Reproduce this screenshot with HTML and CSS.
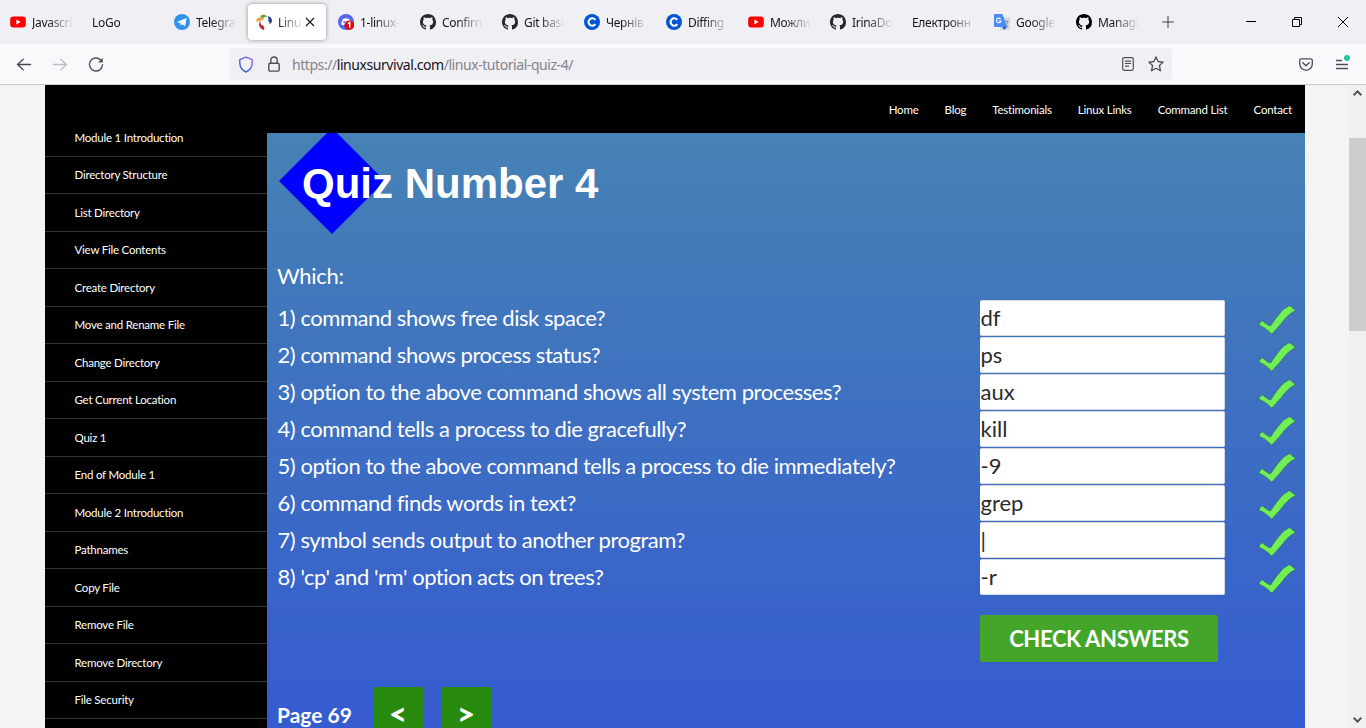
FILE: index.html
```
<!DOCTYPE html>
<html lang="en">
<head>
<meta charset="utf-8">
<title>Linux Survival</title>
<link rel="stylesheet" href="styles.css">
</head>
<body>
<svg class="defs" width="0" height="0">
  <symbol id="youtube" viewBox="0 0 16 16"><rect x="0.2" y="2.4" width="15.6" height="11.2" rx="3" fill="#f00"/><path d="M6.4 5.6v4.8l4.2-2.4z" fill="#fff"/></symbol>
  <symbol id="telegram" viewBox="0 0 16 16"><circle cx="8" cy="8" r="8" fill="#2f93ee"/><path d="M3 8 12.6 4.1 11 12.3 8.2 10.3 6.8 11.6 6.4 9.2z" fill="#fff"/><path d="M6.5 9.3 10.4 6.2 7.4 9.7 6.8 11.4z" fill="#a9d3f8"/></symbol>
  <symbol id="github" viewBox="0 0 16 16"><path d="M8 0C3.58 0 0 3.58 0 8c0 3.54 2.29 6.53 5.47 7.59.4.07.55-.17.55-.38 0-.19-.01-.82-.01-1.49-2.01.37-2.53-.49-2.69-.94-.09-.23-.48-.94-.82-1.13-.28-.15-.68-.52-.01-.53.63-.01 1.08.58 1.23.82.72 1.21 1.87.87 2.33.66.07-.52.28-.87.51-1.07-1.78-.2-3.64-.89-3.64-3.95 0-.87.31-1.59.82-2.15-.08-.2-.36-1.02.08-2.12 0 0 .67-.21 2.2.82.64-.18 1.32-.27 2-.27s1.36.09 2 .27c1.53-1.04 2.2-.82 2.2-.82.44 1.1.16 1.92.08 2.12.51.56.82 1.27.82 2.15 0 3.07-1.87 3.75-3.65 3.95.29.25.54.73.54 1.48 0 1.07-.01 1.93-.01 2.2 0 .21.15.46.55.38A8.01 8.01 0 0 0 16 8c0-4.42-3.58-8-8-8z" fill="currentColor"/></symbol>
  <symbol id="coursera" viewBox="0 0 16 16"><circle cx="8" cy="8" r="8" fill="#0056d2"/><path d="M11.3 10.1A3.7 3.7 0 1 1 11.3 5.9" fill="none" stroke="#fff" stroke-width="2.1"/></symbol>
  <symbol id="joomla" viewBox="0 0 16 16"><path d="M4 2.3Q7.8-1.6 11.5 2.7Q8.4 2.6 7 4.6Q5.5 4.5 4 2.3z" fill="#6ba644"/><path d="M0 7.8Q.6 3.2 4.4 3.5Q7.3 4 8.2 6.2Q4.6 5.6 3.6 7.4Q1.8 6.6 0 7.8z" fill="#f39c34"/><path d="M11.6 2.2Q16.2 2.4 16 7.4Q15.4 9.6 13.4 10.2Q13.8 7.6 12 6.4Q13 4.4 11.6 2.2z" fill="#2c4b95"/><path d="M4.4 6.8Q3.9 9.4 5.4 11Q7.2 11 8.2 13V16Q3.7 15.2 3 10.7Q2.9 8.4 4.4 6.8z" fill="#b7332e"/></symbol>
  <symbol id="discord" viewBox="0 0 16 16"><circle cx="8" cy="8" r="8" fill="#5865f2"/><path d="M4.9 5Q8 3.7 11.1 5Q13 8 12.6 10.6L10.8 11.6 10 10.4H6L5.2 11.6 3.4 10.6Q3 8 4.9 5z" fill="#fff"/><ellipse cx="6.3" cy="8.1" rx="1" ry="1.1" fill="#5865f2"/><circle cx="11.4" cy="11.2" r="4.8" fill="#e00808"/><path d="M10 9.7 11.7 8.5V13.8" fill="none" stroke="#fff" stroke-width="1.5"/></symbol>
  <symbol id="translate" viewBox="0 0 16 16"><rect x="6" y="3" width="10" height="13" rx=".7" fill="#d9dcde"/><path d="M9 7.4h5.7M12 5.8v1.6M10 8.2q1.2 3 4 4.6M13.7 8q-1 3.4-3.4 4.7" fill="none" stroke="#7096a0" stroke-width="1"/><path d="M.7 0h7.8L13 13H.7Q0 13 0 12.3V.7Q0 0 .7 0z" fill="#4b8bf5"/><path d="M8.2 13H13l-3 3z" fill="#3058c4"/><path d="M6.6 5A2.3 2.3 0 1 0 7 7H4.8" fill="none" stroke="#fff" stroke-width="1.1"/></symbol>
  <symbol id="check" viewBox="0 0 36 30" preserveAspectRatio="none"><path d="M.5 20.2 3.5 15.6 9.3 20 11.9 21Q18 11 24.2 4.2L30 .5 35.5 5.6Q28.5 9 21.5 19.2L13 29.2 10.5 26.4Q5 21.4.5 20.2z" fill="#72ef55" stroke="#285f45" stroke-width=".8" stroke-dasharray="1.2 .8"/></symbol>
</svg>
<div class="browser">
  <div class="tabbar">
    <div class="tab"><svg class="ico"><use href="#youtube"/></svg><span class="label">Javascri</span></div>
    <div class="tab"><span class="label">LoGo</span></div>
    <div class="tab"><svg class="ico"><use href="#telegram"/></svg><span class="label">Telegra</span></div>
    <div class="tab active"><svg class="ico"><use href="#joomla"/></svg><span class="label">Linu</span><svg class="close" viewBox="0 0 10 10"><path d="M1 1l8 8M9 1l-8 8" stroke="#15141a" stroke-width="1.1"/></svg></div>
    <div class="tab"><svg class="ico"><use href="#discord"/></svg><span class="label">1-linux-</span></div>
    <div class="tab"><svg class="ico gh"><use href="#github"/></svg><span class="label">Confirn</span></div>
    <div class="tab"><svg class="ico gh"><use href="#github"/></svg><span class="label">Git basi</span></div>
    <div class="tab"><svg class="ico"><use href="#coursera"/></svg><span class="label">Чернів</span></div>
    <div class="tab"><svg class="ico"><use href="#coursera"/></svg><span class="label">Diffing</span></div>
    <div class="tab"><svg class="ico"><use href="#youtube"/></svg><span class="label">Можли</span></div>
    <div class="tab"><svg class="ico gh"><use href="#github"/></svg><span class="label">IrinaDo</span></div>
    <div class="tab"><span class="label">Електронн</span></div>
    <div class="tab"><svg class="ico"><use href="#translate"/></svg><span class="label">Google</span></div>
    <div class="tab"><svg class="ico"><use href="#github"/></svg><span class="label">Managi</span></div>
    <svg class="plus" viewBox="0 0 12 12"><path d="M6 0v12M0 6h12" stroke="#4a4953" stroke-width="1.1"/></svg>
    <div class="window-buttons">
      <svg width="10" height="10"><path d="M0 4.5h10" stroke="#000"/></svg>
      <svg width="10" height="10" fill="none" stroke="#000"><path d="M.5 2.5h7v7h-7zM2.5 2.5v-2h7v7h-2"/></svg>
      <svg width="10" height="10"><path d="M0 0l10 10M10 0L0 10" stroke="#000"/></svg>
    </div>
  </div>
  <div class="toolbar">
    <div class="history">
      <svg width="16" height="16" fill="none" stroke="#4a4953" stroke-width="1.3" stroke-linecap="round" stroke-linejoin="round"><path d="M14.5 8.5H1.5M7.2 3.2 1.5 8.5l5.7 5.3"/></svg>
      <svg width="16" height="16" fill="none" stroke="#bcbbc1" stroke-width="1.3" stroke-linecap="round" stroke-linejoin="round"><path d="M1.5 8.5h13M8.8 3.2 14.5 8.5l-5.7 5.3"/></svg>
      <svg width="16" height="16" fill="none" stroke="#55545e" stroke-width="1.4" stroke-linecap="round"><path d="M14.5 8.8A6.5 6.5 0 1 1 12.6 3.9L14 5.2"/><path d="M14.7 1.7v4.7H10z" fill="#55545e" stroke="none"/></svg>
    </div>
    <div class="urlbar">
      <svg width="16" height="17" viewBox="0 0 16 17" fill="none"><defs><linearGradient id="sg" x1="0" y1="1" x2="1" y2="0"><stop offset="0" stop-color="#2860ce"/><stop offset="1" stop-color="#9060f5"/></linearGradient></defs><path d="M8 1.2 14.2 3.6V7Q14.2 13 8 16 1.8 13 1.8 7V3.6z" stroke="url(#sg)" stroke-width="1.4" stroke-linejoin="round"/></svg>
      <svg class="lock" width="12" height="16" fill="none" stroke="#4f4e57" stroke-width="1.4"><rect x=".8" y="7.2" width="10.4" height="7.9" rx="1.3"/><path d="M2.8 7V4.2a3.2 3.2 0 0 1 6.4 0V7"/></svg>
      <span class="url">https://<b>linuxsurvival.com</b>/linux-tutorial-quiz-4/</span>
      <svg width="12" height="14" fill="none" stroke="#4f4e57" stroke-width="1.2"><rect x=".7" y=".7" width="10.6" height="12.6" rx="1.5"/><path d="M3 4.2h6M3 6.5h6M3 9.2h4"/></svg>
      <svg class="star" width="16" height="16" fill="none" stroke="#4f4e57" stroke-width="1.3" stroke-linejoin="round"><path d="M8 .9 10.1 5.5 15.2 6.1 11.4 9.5 12.5 14.8 8 12.3 3.5 14.8 4.6 9.5.8 6.1 5.9 5.5z"/></svg>
    </div>
    <svg class="pocket" width="14" height="13" fill="none" stroke="#4f4e57" stroke-width="1.3"><path d="M2 .9h10q1.3 0 1.3 1.3V6Q13 11.4 7 12.3 1 11.4.7 6V2.2Q.7.9 2 .9z"/><path d="M3.8 4.8 7 7.8l3.2-3" stroke-width="1.4" stroke-linecap="round"/></svg>
    <svg class="menu" width="16" height="16"><path d="M1 5.5h6M1 9.5h12M1 13.5h12" stroke="#4f4e57" stroke-width="1.3"/><circle cx="12" cy="3" r="3" fill="#2ac3a2"/></svg>
  </div>
</div>
<div class="viewport">
  <div class="site">
    <nav class="topnav"><a>Home</a><a>Blog</a><a>Testimonials</a><a>Linux Links</a><a>Command List</a><a>Contact</a></nav>
    <div class="columns">
      <ul class="sidebar">
        <li>Module 1 Introduction</li><li>Directory Structure</li><li>List Directory</li><li>View File Contents</li><li>Create Directory</li><li>Move and Rename File</li><li>Change Directory</li><li>Get Current Location</li><li>Quiz 1</li><li>End of Module 1</li><li>Module 2 Introduction</li><li>Pathnames</li><li>Copy File</li><li>Remove File</li><li>Remove Directory</li><li>File Security</li><li></li>
      </ul>
      <main class="quiz">
        <header class="hero"><svg class="diamond" width="106" height="101"><path d="M53-5 106 48 53 101 0 48z" fill="#00f"/></svg><h1>Quiz Number 4</h1></header>
        <p class="intro">Which:</p>
        <div class="rows">
          <div class="row"><span>1) command shows free disk space?</span><div class="field">df</div><svg class="tick"><use href="#check"/></svg></div>
          <div class="row"><span>2) command shows process status?</span><div class="field">ps</div><svg class="tick"><use href="#check"/></svg></div>
          <div class="row"><span>3) option to the above command shows all system processes?</span><div class="field">aux</div><svg class="tick"><use href="#check"/></svg></div>
          <div class="row"><span>4) command tells a process to die gracefully?</span><div class="field">kill</div><svg class="tick"><use href="#check"/></svg></div>
          <div class="row"><span>5) option to the above command tells a process to die immediately?</span><div class="field">-9</div><svg class="tick"><use href="#check"/></svg></div>
          <div class="row"><span>6) command finds words in text?</span><div class="field">grep</div><svg class="tick"><use href="#check"/></svg></div>
          <div class="row"><span>7) symbol sends output to another program?</span><div class="field">|</div><svg class="tick"><use href="#check"/></svg></div>
          <div class="row"><span>8) 'cp' and 'rm' option acts on trees?</span><div class="field">-r</div><svg class="tick"><use href="#check"/></svg></div>
        </div>
        <div class="check-button">CHECK ANSWERS</div>
        <div class="pager"><b>Page 69</b><span class="pg">&lt;</span><span class="pg">&gt;</span></div>
      </main>
    </div>
  </div>
  <div class="scrollbar">
    <svg width="9" height="6"><path d="M.7 5.2 4.5 1.4 8.3 5.2" fill="none" stroke="#505050" stroke-width="2"/></svg>
    <div class="thumb"></div>
    <svg width="9" height="6"><path d="M.7.8 4.5 4.6 8.3.8" fill="none" stroke="#505050" stroke-width="2"/></svg>
  </div>
</div>
</body>
</html>
```
FILE: styles.css
```
* { box-sizing: border-box; }
body { margin: 0; width: 1366px; height: 728px; overflow: hidden; display: flex; flex-direction: column; background: #f4f4f4; font-family: Lato, sans-serif; }
.defs { position: absolute; }
svg { flex: none; display: block; }

.browser { height: 85px; flex: none; background: #f9f9fb; border-bottom: 1px solid #ccccce; font-family: "Noto Sans", sans-serif; }
.tabbar { height: 44px; background: #f0eff4; display: flex; align-items: center; gap: 4px; padding-left: 2px; }
.tab { width: 78px; height: 36px; flex: none; display: flex; align-items: center; gap: 6px; padding: 0 7px 0 8px; font-size: 12px; letter-spacing: -.3px; color: #15141a; border-radius: 4px; }
.tab.active { background: #fff; box-shadow: 0 0 4px rgba(0,0,0,.4); }
.tab.active .label { margin-right: -5px; }
.ico { width: 16px; height: 16px; color: #000; }
.gh { color: #24292e; }
.label { flex: 1; min-width: 0; white-space: nowrap; line-height: 20px; padding-top: 2px; mask-image: linear-gradient(to left, transparent, #000 26px); }
.close { width: 10px; height: 10px; margin-right: 4px; }
.plus { width: 12px; height: 12px; margin-left: 12px; }
.window-buttons { margin-left: auto; margin-right: 18px; display: flex; gap: 36px; }

.toolbar { height: 40px; display: flex; align-items: center; }
.history { width: 230px; flex: none; display: flex; gap: 20px; padding-left: 16px; }
.urlbar { width: 942px; height: 32px; background: #f0eff4; border-radius: 4px; display: flex; align-items: center; padding: 0 8px; }
.lock { margin: 0 12px 0 14px; }
.url { flex: 1; font-size: 14px; letter-spacing: -.44px; color: #85848a; line-height: 20px; padding-top: 2px; }
.url b { font-weight: 400; color: #15141a; }
.star { margin-left: 14px; }
.pocket { margin-left: 127px; }
.menu { margin: -3px 0 0 22px; }

.viewport { flex: 1; min-height: 0; display: flex; }
.site { width: 1260px; margin-left: 45px; background: #000; display: flex; flex-direction: column; }
.topnav { height: 48px; flex: none; display: flex; justify-content: flex-end; gap: 26px; padding: 0 13px; font-size: 11.5px; letter-spacing: -.2px; line-height: 50px; color: #fff; }
.columns { flex: 1; min-height: 0; display: flex; overflow: hidden; }
.sidebar { width: 222px; flex: none; margin: -14px 0 0; padding: 0; list-style: none; color: #fff; font-size: 11.5px; letter-spacing: -.22px; }
.sidebar li { height: 37.5px; padding-left: 29.5px; line-height: 37px; border-bottom: 1px solid #333; }
.sidebar li:nth-child(even) { line-height: 35.5px; }
.quiz { flex: 1; background: linear-gradient(#4682b4, #355bd0); color: #fff; font-size: 22px; padding: 0 9px 0 10px; }
.hero { display: grid; height: 101px; padding-left: 2px; }
.diamond, h1 { grid-area: 1 / 1; }
h1 { margin: 0; padding-left: 23px; font: bold 42px/101px "Liberation Sans", Arial, sans-serif; }
.intro { margin: 24px 0 0; height: 41px; line-height: 36px; letter-spacing: -.3px; }
.row { height: 37px; display: flex; align-items: center; }
.row span { width: 703px; white-space: nowrap; line-height: 36px; padding-left: .5px; letter-spacing: -.46px; }
.field { width: 245px; height: 36px; background: #fff; border: 1px solid #d5dbe3; border-left-width: 0; padding-left: .5px; border-radius: 2px; color: #2b2b2b; line-height: 34px; }
.tick { width: 38px; height: 30px; margin-left: 33px; margin-right: -2px; margin-top: 4px; }
.check-button { width: 238px; height: 47px; margin: 20px 0 0 703px; border-radius: 2px; background: #43a62a; text-align: center; font-weight: 700; line-height: 47px; letter-spacing: -.35px; }
.pager { display: flex; margin-top: 25px; line-height: 55px; font-size: 21px; }
.pager b { width: 97px; white-space: nowrap; }
.pg { width: 50px; height: 54px; margin-right: 18px; padding-right: 2px; border-radius: 2px; background: #278a0e; text-align: center; font-size: 31px; font-weight: 900; line-height: 52px; }
.scrollbar { width: 17px; margin-left: auto; background: #f0f0f0; display: flex; flex-direction: column; align-items: center; padding: 5px 0; }
.thumb { width: 17px; height: 193px; margin: 42px 0 auto; background: #cdcdcd; }
```
